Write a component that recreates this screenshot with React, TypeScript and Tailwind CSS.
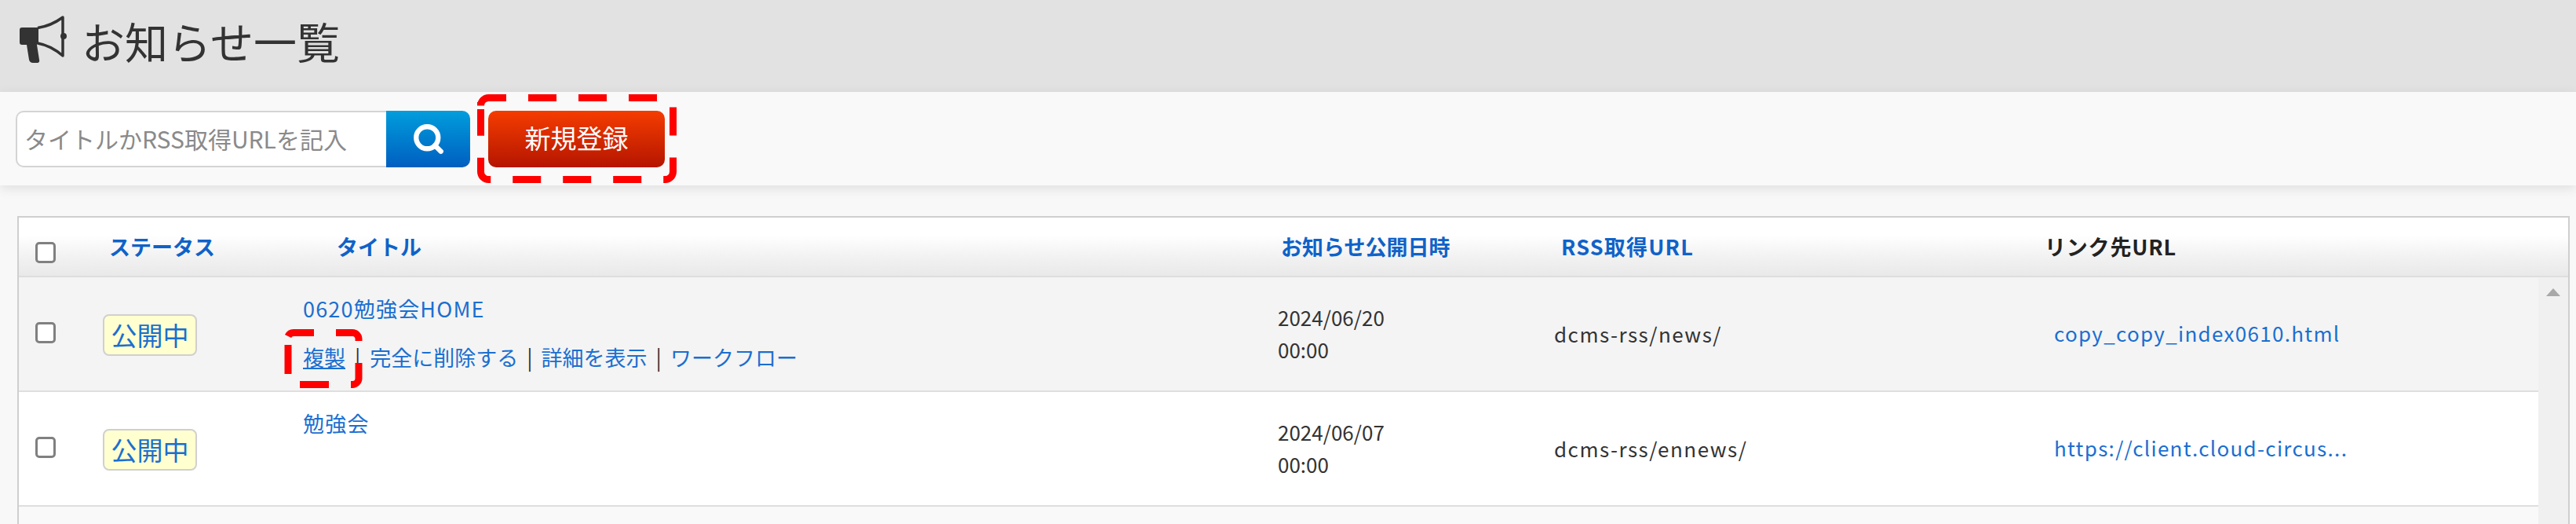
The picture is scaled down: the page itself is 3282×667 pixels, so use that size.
import { Search } from "lucide-react";

const font = "font-['Noto_Sans_CJK_JP','Noto_Sans',sans-serif]";

interface NewsRow {
  title: string;
  date: string;
  rss: string;
  link: string;
  actions: boolean;
  bg: string;
}

const rows: NewsRow[] = [
  { title: "0620勉強会HOME", date: "2024/06/20", rss: "dcms-rss/news/", link: "copy_copy_index0610.html", actions: true, bg: "bg-[#f4f4f4]" },
  { title: "勉強会", date: "2024/06/07", rss: "dcms-rss/ennews/", link: "https://client.cloud-circus...", actions: false, bg: "bg-white" },
];

function Megaphone() {
  return (
    <svg width="64" height="64" viewBox="0 0 64 64" className="shrink-0">
      <path d="M5 15 Q2 15 2 18 L2 34 Q2 37 5 37 L11 37 L14 56 Q15 60 19 60 L25 60 Q28 59 27 56 L24 37 L26 35 L26 15 Z" fill="#333" />
      <path d="M25 15.5 Q42 13 57 2 L57 51 Q42 38 25 35" fill="none" stroke="#333" strokeWidth="3.5" strokeLinejoin="round" />
      <circle cx="58" cy="26" r="4" fill="#333" />
    </svg>
  );
}

function Checkbox() {
  return <span className="block w-[26px] h-[27px] rounded-[5px] border-[3px] border-[#808080] bg-white shrink-0" />;
}

function Row({ row }: { row: NewsRow }) {
  return (
    <div className={`flex h-[146px] border-b-2 border-[#dedede] ${row.bg}`}>
      <div className="w-[107px] pl-[21px] pt-[57px] shrink-0">
        <Checkbox />
      </div>
      <div className="w-[255px] pt-[47px] shrink-0">
        <span className="flex items-center justify-center w-[120px] h-[53px] rounded-lg border-2 border-[#d0d0d0] bg-[#ffffd0] text-[33px] leading-none text-[#1a6fd0]">
          公開中
        </span>
      </div>
      <div className="w-[1242px] pt-[20px] shrink-0 text-[27px] leading-[40px] text-[#1a6fd0]">
        <div className="tracking-[1.2px]">{row.title}</div>
        {row.actions && (
          <div className="mt-[22px] flex items-center">
            <span className="underline">複製</span>
            <span className="text-[#333] mx-[12px]">|</span>
            <span>完全に削除する</span>
            <span className="text-[#333] mx-[11px]">|</span>
            <span>詳細を表示</span>
            <span className="text-[#333] mx-[11px]">|</span>
            <span>ワークフロー</span>
          </div>
        )}
      </div>
      <div className="w-[352px] shrink-0 flex flex-col justify-center pb-[2px] text-[26px] leading-[41px] text-[#333]">
        <div>{row.date}</div>
        <div>00:00</div>
      </div>
      <div className="w-[637px] shrink-0 flex items-center pb-[2px] text-[26px] tracking-[1.5px] text-[#333]">{row.rss}</div>
      <div className="flex-1 flex items-center pb-[3px] text-[26px] tracking-[1.3px] text-[#1a6fd0]">{row.link}</div>
    </div>
  );
}

export default function App() {
  return (
    <div className={`relative w-[3282px] h-[667px] overflow-hidden bg-[#f8f8f8] ${font}`}>
      <div className="h-[117px] bg-[#e2e2e2] flex items-start pl-[23px] pt-[20px] gap-[17px]">
        <Megaphone />
        <h1 className="text-[55px] leading-[62px] text-[#333] font-normal">お知らせ一覧</h1>
      </div>

      <div className="h-[119px] bg-[#f9f9f9] shadow-[0_4px_14px_rgba(0,0,0,0.1)] pl-[20px] pt-[24px] flex items-start">
        <div className="flex h-[72px] w-[579px]">
          <input
            readOnly
            placeholder="タイトルかRSS取得URLを記入"
            className="w-[472px] h-full bg-white border-2 border-r-0 border-[#d4d4d4] rounded-l-[10px] pl-[9px] pb-[3px] text-[30px] outline-none placeholder:text-[#8a8a8a]"
          />
          <button className="w-[107px] h-full rounded-r-[10px] bg-gradient-to-b from-[#059ddc] to-[#005ec0] flex items-center justify-center">
            <Search size={42} strokeWidth={3.6} color="#fff" />
          </button>
        </div>
        <button className="ml-[23px] w-[225px] h-[72px] rounded-[10px] bg-gradient-to-b from-[#f53c00] to-[#b51400] text-white text-[33px] pb-[2px]">
          新規登録
        </button>
      </div>

      <div className="mt-[39px] ml-[22px] mr-[8px] h-[400px] border-2 border-[#cfcfcf] bg-white">
        <div className="grid grid-cols-[115px_290px_1203px_357px_616px_1fr] h-[76px] items-center border-b-2 border-[#dedede] bg-[linear-gradient(#fff_30%,#f1f1f1_70%,#e9e9e9)] text-[27px] font-bold text-[#0f62c8]">
          <div className="pl-[21px] pt-[14px]">
            <Checkbox />
          </div>
          <div>ステータス</div>
          <div>タイトル</div>
          <div>お知らせ公開日時</div>
          <div className="tracking-[1.2px]">RSS取得URL</div>
          <div className="tracking-[0.8px] text-[#222]">リンク先URL</div>
        </div>
        <div className="flex">
          <div className="flex-1 min-w-0">
            {rows.map((row) => (
              <Row key={row.title} row={row} />
            ))}
            <div className="h-[40px] bg-[#f9f9f9]" />
          </div>
          <div className="w-[38px] h-[400px] bg-[#f0f0f0] flex justify-center pt-[14px]">
            <span className="w-0 h-0 border-x-[9px] border-x-transparent border-b-[10px] border-b-[#a8a8a8]" />
          </div>
        </div>
      </div>

      {/* red annotation marks drawn over the screenshot */}
      <svg width="3282" height="667" className="absolute left-0 top-0 pointer-events-none" fill="none" stroke="#ff0000" strokeWidth="9">
        <path d="M673 124.5 H847.5 A10 10 0 0 1 857.5 134.5 V218.5 A10 10 0 0 1 847.5 228.5 H622.5 A10 10 0 0 1 612.5 218.5 V139" strokeDasharray="36 28" />
        <path d="M612.5 130 V134.5 A10 10 0 0 1 622.5 124.5 H645" />
        <path d="M367 428 A8 8 0 0 1 375 423.5 H400" />
        <path d="M428 423.5 H449 A8 8 0 0 1 457 431.5 V434" />
        <path d="M367 439 V476" />
        <path d="M457 462 V481.5 A8 8 0 0 1 449 489.5 H447" />
        <path d="M382 489.5 H419" />
      </svg>
    </div>
  );
}
